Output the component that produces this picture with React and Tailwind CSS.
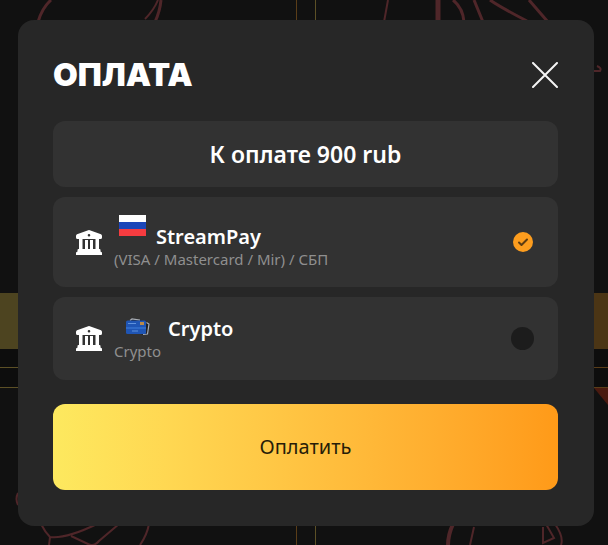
import { useState } from "react";

const methods = [
  { id: "streampay", title: "StreamPay", note: "(VISA / Mastercard / Mir) / СБП", icon: "flag" },
  { id: "crypto", title: "Crypto", note: "Crypto", icon: "cards" },
];

function BankIcon() {
  return (
    <svg viewBox="0 0 26 25" className="w-[26px] h-[25px] shrink-0 fill-white" aria-hidden="true">
      <path
        fillRule="evenodd"
        d="M11.500 0.400Q13 -0.300 14.500 0.400L25 4.200Q26 4.600 26 6V7.500Q26 9 24.500 9H1.500Q0 9 0 7.500V6Q0 4.600 1 4.200ZM13 4a1.300 1.300 0 1 0 0 2.600a1.300 1.300 0 1 0 0-2.600Z"
      />
      <path d="M3 8H6.500V20H3ZM9 10H12V20H9ZM14 10H17V20H14ZM19.500 8H23V20H19.500Z" />
      <path d="M2.500 19H23.500Q24.500 19 24.500 20V21.500L26 22.500V25H0V22.500L1.500 21.500V20Q1.500 19 2.500 19Z" />
    </svg>
  );
}

function FlagIcon() {
  return (
    <svg viewBox="0 0 27 21" className="w-[27px] h-[21px] mb-[13px]" aria-hidden="true">
      <path d="M0 0H27V7H0Z" fill="#ffffff" />
      <path d="M0 7H27V14H0Z" fill="#1c46b8" />
      <path d="M0 14H27V21H0Z" fill="#f63c40" />
    </svg>
  );
}

function CardsIcon() {
  return (
    <svg viewBox="0 0 24 18" className="w-6 h-[18px] ml-[7px] mr-2 mb-[5px]" aria-hidden="true">
      <path d="M4 2 6 0.500 15 2 20 4 24 5.500 21.500 16.500 16 17Z" fill="#1f2126" />
      <path d="M4 2.500 6 1 14 2.200M20.500 4.500 23 6 21.500 16 17 16.500" stroke="#a9aeb5" strokeWidth="1.200" fill="none" />
      <rect x="0" y="2.500" width="20" height="13.500" rx="1.500" fill="#1f55b4" />
      <path d="M0 9H20V11H0Z" fill="#2f6ac8" />
      <path d="M2 5.500H10M6 13H12" stroke="#5f92dc" strokeWidth="1" />
      <rect x="14" y="4" width="4" height="3" fill="#b98a4a" />
    </svg>
  );
}

function Backdrop() {
  return (
    <div className="absolute inset-0 overflow-hidden" aria-hidden="true">
      <svg viewBox="0 0 608 545" preserveAspectRatio="xMidYMid slice" className="w-full h-full" fill="none">
        <path d="M0 293H304V349H0Z" fill="#4d4420" />
        <path d="M304 293H608V349H304Z" fill="#4b3515" />
        <path d="M0 349H608V367H0ZM0 368H608V387H0Z" fill="#0d0d0d" />
        <path d="M0 367.500H304M0 387.500H304M315.500 0V545" stroke="#5c5026" />
        <path d="M304 367.500H608M304 387.500H608M296.500 0V545" stroke="#5a3d18" />
        <path d="M594 388H608V405Z" fill="#4a1a10" />
        <g stroke="#4f2629" strokeWidth="2">
          <path d="M158 0Q154 10 145 19M388 0 384 22M594 71H600Q602 68 597 66" />
          <path d="M51 0Q42 8 38 22M161 0Q160 11 155 22M453 0Q463 8 464 22M474 0 483 22M490 0Q500 7 527 21M529 0 548 22" strokeWidth="3" />
          <path d="M438 0V22" strokeWidth="5" />
          <path d="M18 493Q15 499 18 505M41 524Q45 532 50 537L49 545M50 537Q66 539 97 524M71 536 88 544Q94 547 99 541L119 524M149 524Q147 535 140 545" />
          <path d="M474 527 470 545M543 527V543L554 538 546 524M555 524Q564 537 561 545" />
          <path d="M453 524Q448 535 448 545" strokeWidth="4" />
        </g>
      </svg>
    </div>
  );
}

export default function App() {
  const [open, setOpen] = useState(true);
  const [selected, setSelected] = useState("streampay");

  return (
    <div className="relative min-h-screen bg-[#111111] pt-5 pb-4 pl-[18px] pr-[14px] font-['Noto_Sans',sans-serif] text-white">
      <Backdrop />
      {open && (
        <form
          role="dialog"
          aria-labelledby="pay-title"
          onSubmit={(e) => e.preventDefault()}
          className="relative rounded-2xl bg-[#272727] pt-[37px] pb-9 pl-[35px] pr-9"
        >
          <div className="flex items-center justify-between h-9 mb-7">
            <h1 id="pay-title" className="font-['Inter',sans-serif] text-[32px] leading-9 font-black">ОПЛАТА</h1>
            <button type="button" aria-label="Закрыть" onClick={() => setOpen(false)}>
              <svg viewBox="0 0 26 26" className="w-[26px] h-[26px]" fill="none" stroke="#f5f5f5" strokeWidth="2">
                <path d="M1 1 25 25M25 1 1 25" strokeLinecap="round" />
              </svg>
            </button>
          </div>

          <p className="flex items-center justify-center h-[66px] mb-[10px] rounded-xl bg-[#323232] text-[23px] leading-8 font-semibold">
            К оплате 900 rub
          </p>

          <div className="flex flex-col gap-[10px]">
            {methods.map((m) => (
              <label
                key={m.id}
                className={`flex items-center rounded-xl bg-[#323232] pl-[23px] pr-6 cursor-pointer ${
                  m.icon === "flag" ? "h-[90px]" : "h-[83px]"
                }`}
              >
                <BankIcon />
                <span className="flex flex-col flex-1 pl-3">
                  <span className="flex items-end">
                    <span className="pl-[5px] pr-[10px]">{m.icon === "flag" ? <FlagIcon /> : <CardsIcon />}</span>
                    <span className="text-xl leading-6 font-semibold">{m.title}</span>
                  </span>
                  <span className="text-[15px] leading-5 text-[#8f8f8f]">{m.note}</span>
                </span>
                <span className="relative flex items-center justify-center w-[23px] h-[23px]">
                  <input
                    type="radio"
                    name="method"
                    value={m.id}
                    checked={selected === m.id}
                    onChange={() => setSelected(m.id)}
                    className="peer appearance-none w-[23px] h-[23px] rounded-full bg-[#1c1c1c] checked:w-5 checked:h-5 checked:bg-[#fd9d1e]"
                  />
                  <svg
                    viewBox="0 0 20 20"
                    className="absolute w-5 h-5 pointer-events-none opacity-0 peer-checked:opacity-100"
                    fill="none"
                    stroke="#5d3c12"
                    strokeWidth="2"
                  >
                    <path d="M6 10.500 8.500 13 14 7.500" strokeLinecap="round" strokeLinejoin="round" />
                  </svg>
                </span>
              </label>
            ))}
          </div>

          <button
            type="submit"
            className="w-full h-[86px] mt-6 rounded-xl bg-linear-to-r from-[#fde95f] to-[#ff9a18] text-[#271d08] text-xl"
          >
            Оплатить
          </button>
        </form>
      )}
    </div>
  );
}
